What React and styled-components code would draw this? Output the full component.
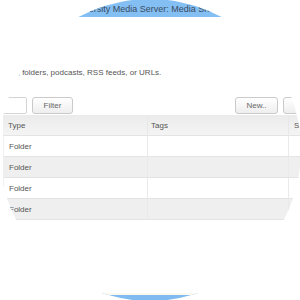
import React from "react";
import styled, { createGlobalStyle } from "styled-components";

const GlobalStyle = createGlobalStyle`
  html, body {
    margin: 0;
    padding: 0;
    background: #ffffff;
  }
  body {
    font-family: "Liberation Sans", Arial, sans-serif;
  }
`;

const Lens = styled.div`
  width: 300px;
  height: 300px;
  overflow: hidden;
  clip-path: circle(151px at 150px 150px);
  background: #ffffff;
`;

const Page = styled.div`
  width: 380px;
  min-height: 300px;
  margin-left: -40px;
  display: flex;
  flex-direction: column;
  background: #ffffff;
`;

const TopBar = styled.div`
  height: 17px;
  background: #84bff3;
  display: flex;
  align-items: center;
  justify-content: center;
  color: #3a4b5e;
  font-size: 9px;
  white-space: nowrap;
`;

const Intro = styled.p`
  margin: 51px 0 0 27px;
  font-size: 8px;
  line-height: 10px;
  color: #555555;
  white-space: nowrap;
`;

const Toolbar = styled.div`
  margin-top: 19px;
  padding: 0 15px 0 5px;
  display: flex;
  align-items: center;
  gap: 5px;
  height: 17px;
`;

const SearchBox = styled.div`
  width: 60px;
  height: 15px;
  border: 1px solid #d4d4d4;
  border-radius: 2px;
  background: #fff;
`;

const Button = styled.div`
  width: ${(p) => p.w}px;
  height: 15px;
  margin-left: ${(p) => (p.push ? "auto" : "0")};
  border: 1px solid #cacaca;
  border-radius: 3px;
  background: linear-gradient(#ffffff, #eeeeee);
  color: #666;
  font-size: 8px;
  display: flex;
  align-items: center;
  justify-content: center;
`;

const Table = styled.div`
  margin: 1px 0 0 43px;
  display: grid;
  grid-template-columns: 144px 141px 1fr;
`;

const HeadCell = styled.div`
  height: 20px;
  padding-left: ${(p) => p.pad || 5}px;
  display: flex;
  align-items: center;
  font-size: 8px;
  color: #555;
  background: linear-gradient(#ebebeb, #f4f4f4);
  border-bottom: 1px solid #e4e4e4;
  border-left: ${(p) => (p.first ? "none" : "1px solid #e8e8e8")};
`;

const Cell = styled.div`
  height: 20px;
  padding-left: 5px;
  display: flex;
  align-items: center;
  font-size: 8px;
  color: #555;
  background: ${(p) => (p.alt ? "#efefef" : "#ffffff")};
  border-bottom: 1px solid #e4e4e4;
  border-left: 1px solid ${(p) => (p.first ? "#f0f0f0" : "#eaeaea")};
`;

const Footer = styled.div`
  margin-top: auto;
  border-top: 2px solid #fbf8ee;
  height: 5px;
  background: #7fbaf1;
`;

const rows = ["Folder", "Folder", "Folder", "Folder"];

const App = () => {
  return (
    <>
      <GlobalStyle />
      <Lens>
        <Page>
          <TopBar>University Media Server: Media Sharing</TopBar>
          <Intro>Add files, folders, podcasts, RSS feeds, or URLs.</Intro>
          <Toolbar>
            <SearchBox />
            <Button w={39}>Filter</Button>
            <Button w={41} push>
              New..
            </Button>
            <Button w={40}>Edit</Button>
          </Toolbar>
          <Table>
            <HeadCell first>Type</HeadCell>
            <HeadCell pad={3}>Tags</HeadCell>
            <HeadCell>Status</HeadCell>
            {rows.map((r, i) => (
              <React.Fragment key={i}>
                <Cell first alt={i % 2 === 1}>
                  {r}
                </Cell>
                <Cell alt={i % 2 === 1} />
                <Cell alt={i % 2 === 1} />
              </React.Fragment>
            ))}
          </Table>
          <Footer />
        </Page>
      </Lens>
    </>
  );
};

export default App;
